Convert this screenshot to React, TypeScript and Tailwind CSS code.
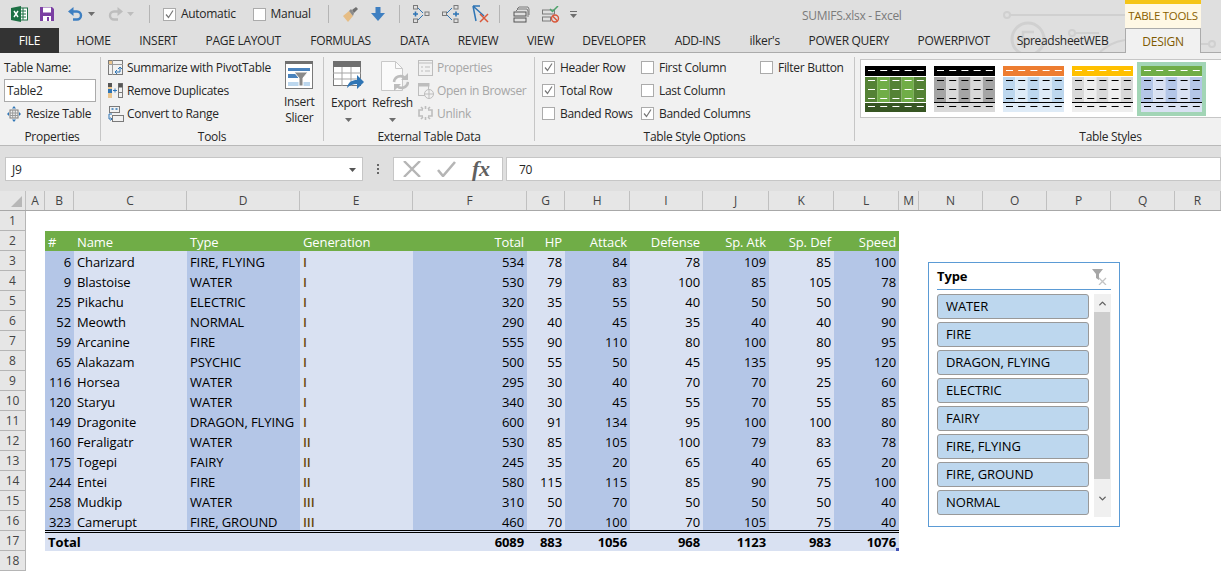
import { ChevronUp, ChevronDown } from "lucide-react";

const rows: (string | number)[][] = [
  [6, "Charizard", "FIRE, FLYING", "I", 534, 78, 84, 78, 109, 85, 100],
  [9, "Blastoise", "WATER", "I", 530, 79, 83, 100, 85, 105, 78],
  [25, "Pikachu", "ELECTRIC", "I", 320, 35, 55, 40, 50, 50, 90],
  [52, "Meowth", "NORMAL", "I", 290, 40, 45, 35, 40, 40, 90],
  [59, "Arcanine", "FIRE", "I", 555, 90, 110, 80, 100, 80, 95],
  [65, "Alakazam", "PSYCHIC", "I", 500, 55, 50, 45, 135, 95, 120],
  [116, "Horsea", "WATER", "I", 295, 30, 40, 70, 70, 25, 60],
  [120, "Staryu", "WATER", "I", 340, 30, 45, 55, 70, 55, 85],
  [149, "Dragonite", "DRAGON, FLYING", "I", 600, 91, 134, 95, 100, 100, 80],
  [160, "Feraligatr", "WATER", "II", 530, 85, 105, 100, 79, 83, 78],
  [175, "Togepi", "FAIRY", "II", 245, 35, 20, 65, 40, 65, 20],
  [244, "Entei", "FIRE", "II", 580, 115, 115, 85, 90, 75, 100],
  [258, "Mudkip", "WATER", "III", 310, 50, 70, 50, 50, 50, 40],
  [323, "Camerupt", "FIRE, GROUND", "III", 460, 70, 100, 70, 105, 75, 40],
];

const header = ["#", "Name", "Type", "Generation", "Total", "HP", "Attack", "Defense", "Sp. Atk", "Sp. Def", "Speed"];
// first two table columns are merged into the "Total" label cell
const totals = ["", "", 6089, 883, 1056, 968, 1123, 983, 1076];
const columnLetters = ["A", "B", "C", "D", "E", "F", "G", "H", "I", "J", "K", "L", "M", "N", "O", "P", "Q", "R"];
const sheetCols = "grid grid-cols-[26px_19px_29px_113px_113px_113px_114px_38px_65px_73px_66px_65px_65px_20px_64px_64px_64px_64px_46px]";

const slicerItems = ["WATER", "FIRE", "DRAGON, FLYING", "ELECTRIC", "FAIRY", "FIRE, FLYING", "FIRE, GROUND", "NORMAL"];

const tabs = [
  { label: "HOME", w: "w-[64px]" },
  { label: "INSERT", w: "w-[65.5px]" },
  { label: "PAGE LAYOUT", w: "w-[104.5px]" },
  { label: "FORMULAS", w: "w-[90px]" },
  { label: "DATA", w: "w-[58px]" },
  { label: "REVIEW", w: "w-[69px]" },
  { label: "VIEW", w: "w-[56px]" },
  { label: "DEVELOPER", w: "w-[91px]" },
  { label: "ADD-INS", w: "w-[76px]" },
  { label: "ilker's", w: "w-[58.5px]" },
  { label: "POWER QUERY", w: "w-[109.5px]" },
  { label: "POWERPIVOT", w: "w-[100.5px]" },
  { label: "SpreadsheetWEB", w: "w-[117px]" },
];

const swatches = [
  { head: "#000000", a: "#548235", b: "#70ad47", total: "#375623", dash: "#ffffff", body: "#ffffff", rule: "#ffffff" },
  { head: "#000000", a: "#a5a5a5", b: "#d9d9d9", total: "#d9d9d9", dash: "#ffffff", body: "#000000", rule: "#000000" },
  { head: "#ed7d31", a: "#bdd7ee", b: "#deebf7", total: "#deebf7", dash: "#ffffff", body: "#000000", rule: "#000000" },
  { head: "#ffc000", a: "#d9d9d9", b: "#eeeeee", total: "#eeeeee", dash: "#ffffff", body: "#000000", rule: "#000000" },
  { head: "#70ad47", a: "#b4c6e7", b: "#d9e1f2", total: "#d9e1f2", dash: "#ffffff", body: "#000000", rule: "#000000" },
];

function Swatch({ s }: { s: (typeof swatches)[number] }) {
  const cols = [0, 1, 2, 3, 4];
  return (
    <svg width="61" height="46" viewBox="0 0 61 46" className="block">
      <rect width="61" height="10" fill={s.head} />
      {cols.map((c) => (
        <rect key={c} x={c * 12.2} y="11" width="12.2" height="26" fill={c % 2 ? s.b : s.a} />
      ))}
      <rect y="36" width="61" height="1" fill={s.rule} />
      <rect y="37" width="61" height="9" fill={s.total} />
      {cols.map((c) => (
        <g key={c}>
          <rect x={c * 12.2 + 3} y="4" width="7" height="1" fill={s.dash} />
          <rect x={c * 12.2 + 3} y="14" width="7" height="1" fill={s.body} />
          <rect x={c * 12.2 + 3} y="23" width="7" height="1" fill={s.body} />
          <rect x={c * 12.2 + 3} y="32" width="7" height="1" fill={s.body} />
          <rect x={c * 12.2 + 3} y="40" width="7" height="1" fill={s.body} />
        </g>
      ))}
    </svg>
  );
}

function Check({ on, label }: { on?: boolean; label: string }) {
  return (
    <div className="flex h-[23px] items-center gap-[5px] whitespace-nowrap">
      <span className="flex h-[13px] w-[13px] items-center justify-center border border-[#ababab] bg-white">
        {on && (
          <svg width="11" height="11" viewBox="0 0 11 11">
            <path d="M2 5.5 4.5 8.5 9 1.5" fill="none" stroke="#777777" strokeWidth="1.2" />
          </svg>
        )}
      </span>
      <span>{label}</span>
    </div>
  );
}

function ExcelLogo() {
  return (
    <svg width="17" height="16" viewBox="0 0 17 16">
      <rect x="6" y="2" width="10.5" height="12" fill="#ffffff" stroke="#1d7044" />
      <path d="M9 5h6M9 8h6M9 11h6M12 2v12" stroke="#1d7044" />
      <path d="M0 2 10 0v16L0 14Z" fill="#1d7044" />
      <path d="M3 5l4 6M7 5l-4 6" stroke="#ffffff" strokeWidth="1.4" />
    </svg>
  );
}

function SaveIcon() {
  return (
    <svg width="14" height="14" viewBox="0 0 14 14">
      <path d="M0 0h12l2 2v12H0Z" fill="#7b3fa3" />
      <rect x="3" y="0.5" width="8" height="5" fill="#ffffff" />
      <rect x="3" y="9" width="8" height="5" fill="#ffffff" />
      <rect x="7" y="10" width="2" height="4" fill="#7b3fa3" />
    </svg>
  );
}

function UndoIcon({ color, flip }: { color: string; flip?: boolean }) {
  return (
    <svg width="15" height="14" viewBox="0 0 15 14" fill="none" className={flip ? "-scale-x-100" : ""}>
      <path d="M2.5 4.5H9a4 4 0 0 1 0 8H5" stroke={color} strokeWidth="2.4" />
      <path d="M0 4.5 5.5 0v9Z" fill={color} />
    </svg>
  );
}

function BrushIcon() {
  return (
    <svg width="16" height="15" viewBox="0 0 16 15">
      <path d="M1 9 7 4l4 5-5 6Z" fill="#e6bd85" />
      <path d="M7 4l2-2 3 4-1 3Z" fill="#8a8a8a" />
      <path d="M10 3l4-3 2 2-4 4Z" fill="#6f6f6f" />
    </svg>
  );
}

function DownArrow() {
  return (
    <svg width="14" height="14" viewBox="0 0 14 14">
      <path d="M4.5 0h5v6H14l-7 8-7-8h4.5Z" fill="#3e7fc1" />
    </svg>
  );
}

function TraceA() {
  return (
    <svg width="18" height="18" viewBox="0 0 18 18" fill="none">
      <rect x="1.5" y="0.5" width="4" height="3.5" stroke="#7a7a7a" />
      <rect x="1.5" y="14" width="4" height="3.5" stroke="#7a7a7a" />
      <rect x="13" y="7" width="4" height="3.5" stroke="#7a7a7a" />
      <path d="M1 9h5M3.5 6.5v5" stroke="#2f75b5" strokeWidth="1.6" />
      <path d="M6 3l5 5M6 15l5-5" stroke="#2f75b5" />
    </svg>
  );
}

function TraceB() {
  return (
    <svg width="18" height="18" viewBox="0 0 18 18" fill="none">
      <rect x="0.5" y="7" width="4" height="3.5" stroke="#7a7a7a" />
      <rect x="12" y="0.5" width="4" height="3.5" stroke="#7a7a7a" />
      <rect x="12" y="14" width="4" height="3.5" stroke="#7a7a7a" />
      <path d="M11 9h6M14 6.5v5" stroke="#2f75b5" strokeWidth="1.6" />
      <path d="M5 8l5-5M5 10l5 5" stroke="#2f75b5" />
    </svg>
  );
}

function TraceX() {
  return (
    <svg width="18" height="18" viewBox="0 0 18 18" fill="none">
      <path d="M2 1h7M2 1l3 15M2 1l11 10" stroke="#2f75b5" strokeWidth="1.5" />
      <path d="M9 9l8 8M17 9l-8 8" stroke="#d9573a" strokeWidth="1.5" />
    </svg>
  );
}

function PagesIcon() {
  return (
    <svg width="17" height="17" viewBox="0 0 17 17" fill="none">
      <path d="M4 3 6 1h9l1 2v6" stroke="#7a7a7a" />
      <path d="M3 5l2-2h9l1 2v6" stroke="#7a7a7a" />
      <rect x="1" y="6" width="12" height="4" stroke="#555555" fill="#dfdfdf" />
      <rect x="1" y="12" width="12" height="4" stroke="#555555" />
    </svg>
  );
}

function ErrorCheckIcon() {
  return (
    <svg width="18" height="17" viewBox="0 0 18 17" fill="none">
      <rect x="0.5" y="4" width="12" height="4" stroke="#7a7a7a" />
      <rect x="0.5" y="11" width="8" height="4" stroke="#7a7a7a" />
      <path d="M8 3l2.5 2.5L16 0" stroke="#4da36b" strokeWidth="1.5" />
      <circle cx="13" cy="12.5" r="3.5" stroke="#d9573a" strokeWidth="1.4" />
      <path d="M10.5 10l5 5" stroke="#d9573a" strokeWidth="1.4" />
    </svg>
  );
}

function SmallCaret({ color = "#6d6d6d" }: { color?: string }) {
  return (
    <svg width="7" height="4" viewBox="0 0 7 4" className="block">
      <path d="M0 0h7L3.5 4Z" fill={color} />
    </svg>
  );
}

function CustomizeCaret() {
  return (
    <svg width="7" height="7" viewBox="0 0 7 7" className="block">
      <path d="M0 0h7v1H0Z" fill="#6d6d6d" />
      <path d="M0 3h7L3.5 7Z" fill="#6d6d6d" />
    </svg>
  );
}

function ResizeIcon() {
  return (
    <svg width="14" height="16" viewBox="0 0 14 16" fill="none">
      <rect x="3" y="4" width="8" height="8" stroke="#7a7a7a" />
      <path d="M3 7h8M3 9.5h8M5.7 4v8M8.3 4v8" stroke="#9a9a9a" />
      <path d="M7 0 5 2.5h4ZM7 16l-2-2.5h4ZM0 8l2-2v4ZM14 8l-2-2v4Z" fill="#2f75b5" />
    </svg>
  );
}

function PivotIcon() {
  return (
    <svg width="15" height="15" viewBox="0 0 15 15" fill="none">
      <rect x="0.5" y="0.5" width="14" height="14" stroke="#7a7a7a" />
      <path d="M0 4.5h15M4.5 0v15" stroke="#9a9a9a" />
      <rect x="1" y="1" width="3" height="3" fill="#e9c48d" />
      <path d="M7 12h5V7M10 9l2-2 2 2M9 10l-2 2 2 2" stroke="#2f75b5" />
    </svg>
  );
}

function DuplicatesIcon() {
  return (
    <svg width="15" height="15" viewBox="0 0 15 15" fill="none">
      <rect x="0" y="0" width="4" height="15" fill="#e9c48d" />
      <rect x="0" y="0" width="4" height="4" fill="#555555" />
      <rect x="0" y="6" width="4" height="4" fill="#2f75b5" />
      <rect x="10.5" y="0.5" width="4" height="14" stroke="#7a7a7a" />
      <rect x="10.5" y="0.5" width="4" height="4" fill="#555555" />
      <path d="M10.5 9.5h4" stroke="#7a7a7a" />
      <path d="M5 7.5h4M7 5.5v4" stroke="#2f75b5" />
    </svg>
  );
}

function ConvertIcon() {
  return (
    <svg width="16" height="16" viewBox="0 0 16 16" fill="none">
      <rect x="1.5" y="0.5" width="10" height="6" stroke="#7a7a7a" />
      <path d="M3.5 3h2M7.5 3h2" stroke="#2f75b5" strokeWidth="1.5" />
      <rect x="4.5" y="9.5" width="11" height="6" stroke="#7a7a7a" />
      <path d="M4 8H1v5h3M2.5 11.5 4 13l-1.5 1.5" stroke="#2f75b5" />
    </svg>
  );
}

function SlicerIcon() {
  return (
    <svg width="28" height="28" viewBox="0 0 28 28">
      <rect x="0.5" y="0.5" width="27" height="27" fill="#ffffff" stroke="#7a7a7a" />
      <rect x="0" y="0" width="28" height="3" fill="#6f6f6f" />
      <rect x="3" y="7" width="22" height="3" fill="#4a83bd" />
      <rect x="3" y="13" width="12" height="4" fill="#4a83bd" />
      <rect x="3" y="21" width="22" height="4" fill="#bcd7ee" />
      <path d="M9 11h14l-5 6v8h-4v-8Z" fill="#8a8a8a" stroke="#ffffff" />
    </svg>
  );
}

function ExportIcon() {
  return (
    <svg width="31" height="31" viewBox="0 0 31 31" fill="none">
      <rect x="0.5" y="0.5" width="27" height="24" fill="#ffffff" stroke="#7a7a7a" />
      <rect x="0" y="0" width="28" height="6" fill="#6f6f6f" />
      <path d="M0 12h28M0 18h28M9 6v19M18 6v19" stroke="#a5a5a5" />
      <path d="M14 27c1-6 5-8 10-8v-5l7 7-7 7v-5c-4 0-7 1-10 4Z" fill="#2f75b5" />
    </svg>
  );
}

function RefreshIcon() {
  return (
    <svg width="28" height="31" viewBox="0 0 28 31" fill="none">
      <path d="M0.5 0.5h14l7 7v22H0.5Z" fill="#fafafa" stroke="#c8c8c8" />
      <path d="M14.5 0.5v7h7" stroke="#c8c8c8" />
      <path d="M13 21a6.5 6.5 0 0 1 11-4M27 21a6.5 6.5 0 0 1-11 4" stroke="#bdbdbd" strokeWidth="2.6" />
      <path d="M27 12v7h-7ZM13 30v-7h7Z" fill="#bdbdbd" />
    </svg>
  );
}

function PropsIcon() {
  return (
    <svg width="15" height="16" viewBox="0 0 15 16" fill="none" stroke="#bdbdbd">
      <rect x="0.5" y="0.5" width="14" height="15" />
      <path d="M0 3h15M3 7h2M7 7h5M3 11h2M7 11h5" />
    </svg>
  );
}

function BrowserIcon() {
  return (
    <svg width="16" height="16" viewBox="0 0 16 16" fill="none" stroke="#bdbdbd">
      <rect x="0.5" y="1.5" width="10" height="11" />
      <rect x="0" y="0" width="11" height="3" fill="#bdbdbd" />
      <circle cx="11" cy="11" r="4.5" fill="#f1f1f1" />
      <path d="M6.5 11h9M11 6.5v9" />
    </svg>
  );
}

function UnlinkIcon() {
  return (
    <svg width="15" height="15" viewBox="0 0 15 15" fill="none" stroke="#bdbdbd" strokeWidth="1.6">
      <path d="M5 4H1v6h4M10 4h4v6h-4M7.5 0v3M7.5 11v3M3 1l2 2M12 1l-2 2M3 13l2-2M12 13l-2-2" />
    </svg>
  );
}

function ClearFilterIcon() {
  return (
    <svg width="16" height="16" viewBox="0 0 16 16">
      <path d="M0 0h11L7 5v6L4 9V5Z" fill="#a6a6a6" />
      <path d="M7 9l7 7M14 9l-7 7" stroke="#c4c4c4" strokeWidth="1.3" />
    </svg>
  );
}

function Divider() {
  return <div className="mt-px h-[84px] w-px shrink-0 bg-[#c6c6c6]" />;
}

function Sep({ className }: { className: string }) {
  return <div className={`h-[18px] w-px bg-[#b4b4b4] ${className}`} />;
}

function GroupLabel({ children }: { children: string }) {
  return <div className="flex h-[18px] items-center justify-center whitespace-nowrap">{children}</div>;
}

function ToolRow({ icon, label, muted }: { icon: React.ReactNode; label: string; muted?: boolean }) {
  return (
    <div className={`flex h-[23px] items-center whitespace-nowrap ${muted ? "text-[#a6a6a6]" : ""}`}>
      <span className="flex w-[19px] shrink-0 items-center">{icon}</span>
      <span>{label}</span>
    </div>
  );
}

export default function App() {
  return (
    <div className="h-[572px] w-[1221px] overflow-hidden bg-[#dfdfdf] font-['Open_Sans',sans-serif] text-[12px] tracking-[-0.3px] text-[#262626]">
      {/* title bar and tabs */}
      <div className="relative">
        <svg width="221" height="52" viewBox="0 0 221 52" fill="none" stroke="#d0d0d0" strokeWidth="2" className="absolute left-[1000px] top-0">
          <circle cx="7" cy="15" r="3" />
          <path d="M10 15h115" />
          <circle cx="28" cy="39" r="16" strokeWidth="3" />
          <path d="M23 47V32h11M23 39h8" strokeWidth="2.5" />
          <circle cx="72" cy="33" r="3" />
          <path d="M75 33h24M125 40c-12 2-18 6-25 12" />
          <circle cx="212" cy="44" r="3" />
          <path d="M201 44h8" />
        </svg>

        <div className="relative flex h-[28px]">
          <div className="flex w-[802px] shrink-0 items-center">
            <span className="ml-[11px]"><ExcelLogo /></span>
            <span className="ml-[12px]"><SaveIcon /></span>
            <span className="ml-[14px]"><UndoIcon color="#3e7fc1" /></span>
            <span className="ml-[5px]"><SmallCaret /></span>
            <span className="ml-[13px]"><UndoIcon flip color="#bdbdbd" /></span>
            <span className="ml-[4px]"><SmallCaret color="#bdbdbd" /></span>
            <Sep className="ml-[15px]" />
            <span className="ml-[13px]"><Check on label="Automatic" /></span>
            <span className="ml-[17px]"><Check label="Manual" /></span>
            <Sep className="ml-[17px]" />
            <span className="ml-[13px]"><BrushIcon /></span>
            <span className="ml-[13px]"><DownArrow /></span>
            <Sep className="ml-[14px]" />
            <span className="ml-[12px]"><TraceA /></span>
            <span className="ml-[12px]"><TraceB /></span>
            <span className="ml-[11px]"><TraceX /></span>
            <Sep className="ml-[10px]" />
            <span className="ml-[13px]"><PagesIcon /></span>
            <span className="ml-[12px]"><ErrorCheckIcon /></span>
            <span className="ml-[10px]"><CustomizeCaret /></span>
          </div>
          <div className="w-[323px] shrink-0 pt-[7px] text-[#7b7b7b]">SUMIFS.xlsx - Excel</div>
          <div className="w-[76px] shrink-0 border-t-4 border-[#f5c518] bg-[#fff8e5] pt-[3px] text-center text-[11.5px] text-[#8a5f00]">TABLE TOOLS</div>
        </div>

        <div className="relative flex h-[25px] border-b border-[#ababab]">
          <div className="flex h-[25px] w-[59px] items-center justify-center bg-[#333333] text-white">FILE</div>
          <div className="w-[2.5px]" />
          {tabs.map((t) => (
            <div key={t.label} className={`flex h-[24px] items-center justify-center whitespace-nowrap pt-[2px] ${t.w}`}>{t.label}</div>
          ))}
          <div className="ml-[4px] flex h-[25px] w-[76px] items-center justify-center border-x border-t border-[#ababab] bg-[#f1f1f1] pt-px text-[#7f5a00]">DESIGN</div>
        </div>
      </div>

      {/* ribbon */}
      <div className="flex h-[93px] items-start border-b border-[#b9b9b9] bg-[#f1f1f1] pt-[3px]">
        <div className="h-[89px] w-[100px] shrink-0 pl-[4px]">
          <div className="h-[72px]">
            <div className="flex h-[23px] items-center">Table Name:</div>
            <div className="flex h-[23px] w-[92px] items-center border border-[#ababab] bg-white pl-[2px]">Table2</div>
            <div className="flex h-[23px] items-center pl-[3px]">
              <span className="mr-[5px]"><ResizeIcon /></span>Resize Table
            </div>
          </div>
          <GroupLabel>Properties</GroupLabel>
        </div>
        <Divider />

        <div className="h-[89px] w-[222px] shrink-0">
          <div className="flex h-[72px]">
            <div className="w-[183px] shrink-0 pl-[7px]">
              <ToolRow icon={<PivotIcon />} label="Summarize with PivotTable" />
              <ToolRow icon={<DuplicatesIcon />} label="Remove Duplicates" />
              <ToolRow icon={<ConvertIcon />} label="Convert to Range" />
            </div>
            <div className="flex flex-col items-center pt-[5px] leading-[16px]">
              <SlicerIcon />
              <span className="mt-[5px]">Insert</span>
              <span>Slicer</span>
            </div>
          </div>
          <GroupLabel>Tools</GroupLabel>
        </div>
        <Divider />

        <div className="h-[89px] w-[210px] shrink-0">
          <div className="flex h-[72px]">
            <div className="flex w-[49px] shrink-0 flex-col items-center pt-[5px]">
              <ExportIcon />
              <span className="mt-[2px]">Export</span>
              <span className="mt-[6px]"><SmallCaret /></span>
            </div>
            <div className="flex w-[39px] shrink-0 flex-col items-center pt-[5px]">
              <span className="ml-[5px]"><RefreshIcon /></span>
              <span className="mt-[2px]">Refresh</span>
              <span className="mt-[6px]"><SmallCaret /></span>
            </div>
            <div className="pl-[6px]">
              <ToolRow muted icon={<PropsIcon />} label="Properties" />
              <ToolRow muted icon={<BrowserIcon />} label="Open in Browser" />
              <ToolRow muted icon={<UnlinkIcon />} label="Unlink" />
            </div>
          </div>
          <GroupLabel>External Table Data</GroupLabel>
        </div>
        <Divider />

        <div className="h-[89px] w-[319px] shrink-0">
          <div className="flex h-[72px] pl-[7px]">
            <div className="w-[99px] shrink-0">
              <Check on label="Header Row" />
              <Check on label="Total Row" />
              <Check label="Banded Rows" />
            </div>
            <div className="w-[119px] shrink-0">
              <Check label="First Column" />
              <Check label="Last Column" />
              <Check on label="Banded Columns" />
            </div>
            <Check label="Filter Button" />
          </div>
          <GroupLabel>Table Style Options</GroupLabel>
        </div>
        <Divider />

        <div className="h-[89px] min-w-0 flex-1 pl-[5px]">
          <div className="h-[72px] pt-[3px]">
            <div className="flex h-[59px] items-start gap-[8px] border-y border-l border-[#c6c6c6] bg-white pl-[4px] pt-[6px]">
              {swatches.slice(0, 4).map((s) => (
                <Swatch key={s.head + s.a} s={s} />
              ))}
              <div className="-ml-[4px] -mt-[4px] border-[4px] border-[#a2d5b6]">
                <Swatch s={swatches[4]} />
              </div>
            </div>
          </div>
          <div className="ml-[140px]"><GroupLabel>Table Styles</GroupLabel></div>
        </div>
      </div>

      {/* formula bar */}
      <div className="flex h-[45px] pt-[11px]">
        <div className="ml-[5px] flex h-[24px] w-[358px] items-center justify-between border border-[#c6c6c6] bg-white pl-[6px] pr-[6px] pt-px">
          J9
          <SmallCaret color="#555555" />
        </div>
        <div className="flex h-[24px] w-[30px] flex-col items-center justify-center gap-[2px]">
          <span className="h-[2px] w-[2px] bg-[#666666]" />
          <span className="h-[2px] w-[2px] bg-[#666666]" />
          <span className="h-[2px] w-[2px] bg-[#666666]" />
        </div>
        <div className="flex h-[24px] w-[110px] items-center gap-[16px] border border-[#c6c6c6] bg-white pl-[9px]">
          <svg width="18" height="16" viewBox="0 0 18 16" fill="none" stroke="#b5b5b5" strokeWidth="2.4">
            <path d="M1 0l16 16M17 0 1 16" />
          </svg>
          <svg width="19" height="16" viewBox="0 0 19 16" fill="none" stroke="#b5b5b5" strokeWidth="2.6">
            <path d="M1 9l5 6L18 1" />
          </svg>
          <span className="font-['Liberation_Serif',serif] text-[22px] font-bold italic leading-none text-[#606060]">fx</span>
        </div>
        <div className="ml-[3px] flex h-[24px] flex-1 items-center border border-[#c6c6c6] bg-white pl-[12px] pt-px">70</div>
      </div>

      {/* sheet */}
      <div className="relative h-[381px] bg-white text-[13px] tracking-[-0.1px] text-black">
        <div className={`${sheetCols} h-[20px] border-b border-[#a8a8a8] bg-[#e6e6e6] text-[12px] text-[#444444]`}>
          <div className="relative border-r border-[#c0c0c0]">
            <div className="absolute bottom-[3px] right-[3px] h-0 w-0 border-b-[11px] border-l-[11px] border-b-[#b7b7b7] border-l-transparent" />
          </div>
          {columnLetters.map((c) => (
            <div key={c} className="flex items-center justify-center border-r border-[#c0c0c0]">{c}</div>
          ))}
        </div>

        <SheetRow n={1} />
        <div className={`${sheetCols} h-[20px]`}>
          <RowHead n={2} />
          <div />
          {header.map((h, i) => (
            <div key={h} className={`flex h-[20px] items-center bg-[#70ad47] pt-[4px] text-white ${i < 4 ? "pl-[3px]" : "justify-end pr-[3px]"}`}>{h}</div>
          ))}
        </div>
        {rows.map((row, r) => (
          <div key={r} className={`${sheetCols} h-[20px]`}>
            <RowHead n={r + 3} />
            <div />
            {row.map((v, i) => (
              <div
                key={i}
                className={`flex h-[20px] items-center whitespace-nowrap pt-[4px] ${i % 2 === 0 ? "bg-[#b4c6e7]" : "bg-[#d9e1f2]"} ${typeof v === "number" ? "justify-end pr-[3px]" : "pl-[3px]"} ${i === 3 ? "font-semibold text-[#6a4a10]" : ""}`}
              >
                {v}
              </div>
            ))}
          </div>
        ))}
        <div className={`${sheetCols} h-[20px]`}>
          <RowHead n={17} />
          <div />
          <div className="col-span-2 -mt-px flex h-[21px] items-center border-t-[3px] border-double border-black bg-[#d9e1f2] pl-[3px] pt-px font-bold">Total</div>
          {totals.map((v, i) => (
            <div
              key={i}
              className={`relative -mt-px flex h-[21px] items-center border-t-[3px] border-double border-black bg-[#d9e1f2] pt-px font-bold ${typeof v === "number" ? "justify-end pr-[3px]" : "pl-[3px]"}`}
            >
              {v}
              {i === 8 && <span className="absolute bottom-0 right-0 h-[3px] w-[3px] bg-[#3f51b5]" />}
            </div>
          ))}
        </div>
        <SheetRow n={18} />

        {/* slicer floats over the sheet */}
        <div className="absolute left-[928px] top-[71px] h-[265px] w-[192px] border border-[#5b9bd5] bg-white px-[8px]">
          <div className="flex h-[27px] items-center justify-between border-b border-[#5b9bd5] pr-[3px] pt-px font-bold">
            Type
            <ClearFilterIcon />
          </div>
          <div className="mt-[4px] flex justify-between">
            <div className="flex w-[152px] flex-col gap-[3px]">
              {slicerItems.map((item) => (
                <div key={item} className="flex h-[25px] items-center rounded-[3px] border border-[#999999] bg-[#bdd7ee] pl-[8px]">{item}</div>
              ))}
            </div>
            <div className="flex h-[223px] w-[17px] flex-col bg-[#f0f0f0]">
              <div className="flex h-[18px] items-center justify-center"><ChevronUp size={11} strokeWidth={3} className="text-[#606060]" /></div>
              <div className="h-[167px] w-[16px] bg-[#cdcdcd]" />
              <div className="flex flex-1 items-center justify-center"><ChevronDown size={11} strokeWidth={3} className="text-[#606060]" /></div>
            </div>
          </div>
        </div>
      </div>
    </div>
  );
}

function RowHead({ n }: { n: number }) {
  return (
    <div className="flex h-[20px] items-center justify-center border-b border-r border-[#b5b5b5] bg-[#e6e6e6] pt-px text-[12px] text-[#444444]">{n}</div>
  );
}

function SheetRow({ n }: { n: number }) {
  return (
    <div className={`${sheetCols} h-[20px]`}>
      <RowHead n={n} />
    </div>
  );
}
